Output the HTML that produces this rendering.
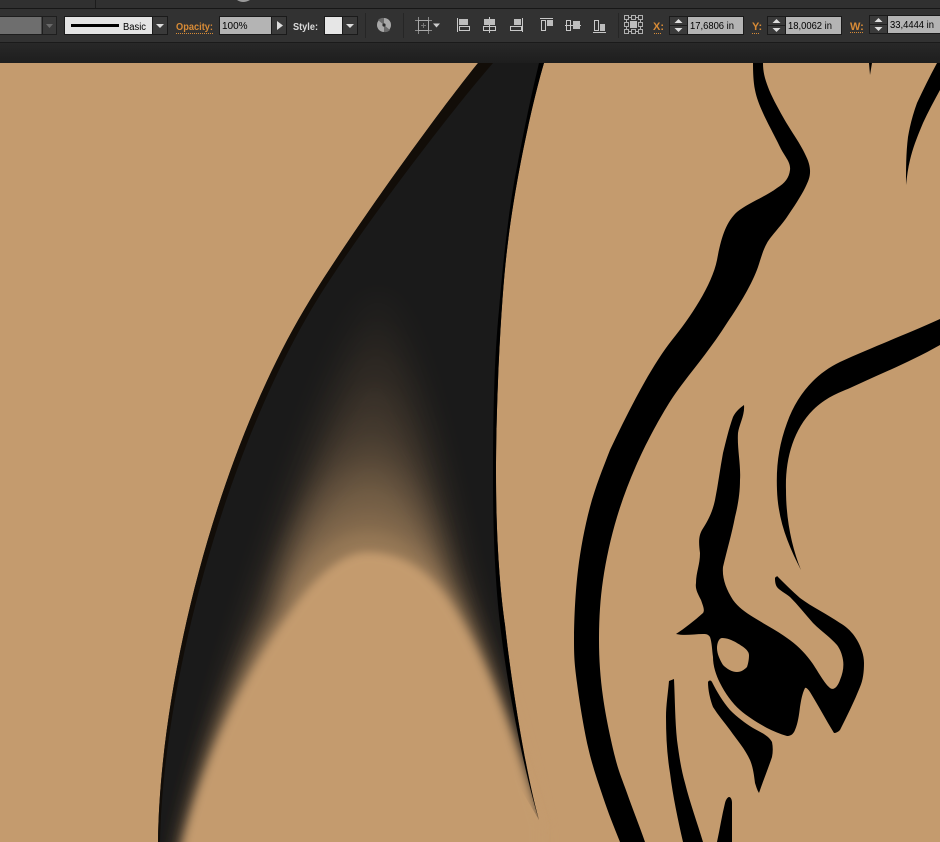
<!DOCTYPE html>
<html>
<head>
<meta charset="utf-8">
<style>
html,body{margin:0;padding:0;background:#c49b6e;}
body{width:940px;height:842px;overflow:hidden;}
svg{display:block;}
text{font-family:"Liberation Sans",sans-serif;}
</style>
</head>
<body>
<svg width="940" height="842" viewBox="0 0 940 842" xmlns="http://www.w3.org/2000/svg">
<defs>
<filter id="b2" x="-20%" y="-20%" width="140%" height="140%"><feGaussianBlur stdDeviation="4.5"/></filter>
<filter id="b6" x="-20%" y="-20%" width="140%" height="140%"><feGaussianBlur stdDeviation="7"/></filter>
<filter id="b10" x="-20%" y="-20%" width="140%" height="140%"><feGaussianBlur stdDeviation="10"/></filter>
<filter id="b14" x="-20%" y="-20%" width="140%" height="140%"><feGaussianBlur stdDeviation="14"/></filter>
<linearGradient id="band" x1="0" y1="0" x2="0" y2="1"><stop offset="0" stop-color="#282828"/><stop offset="1" stop-color="#1e1e1e"/></linearGradient>
</defs>

<rect width="940" height="842" fill="#c49b6e"/>

<!-- horn body -->
<path fill="#1a1a1a" d="M478 63 L544 63 C533 100 515 180 507 250 C501 300 496 400 496 473 C496 540 500 590 505 625 C511 680 525 770 539 820 L480 720 L370 650 L255 760 L205 860 L158 860 L158 842 C160 680 218 450 310 300 C356 225 440 110 478 63 Z"/>

<!-- gradient glow -->
<g fill="#c49b6e">
<path opacity=".04" filter="url(#b14)" d="M172 860 C190 780 215 690 240 611 C280 490 345 295 378 295 C410 295 445 440 470 560 C495 660 520 750 540 825 L540 870 Z"/>
<path opacity=".05" filter="url(#b14)" d="M173 860 C191 779 218 689 246 611 C285 501 345 331 376 331 C409 331 442 458 466 564 C494 659 519 749 540 825 L540 870 Z"/>
<path opacity=".05" filter="url(#b14)" d="M174 860 C193 777 220 687 252 611 C289 511 342 361 375 361 C407 361 440 472 463 568 C492 657 519 747 540 825 L540 870 Z"/>
<path opacity=".07" filter="url(#b10)" d="M175 860 C194 776 222 686 257 611 C288 520 340 389 374 389 C406 389 437 486 461 572 C491 656 518 746 540 825 L540 870 Z"/>
<path opacity=".08" filter="url(#b10)" d="M176 860 C195 775 225 685 263 610 C287 510 338 419 373 419 C405 419 435 502 458 576 C490 655 518 745 540 825 L540 870 Z"/>
<path opacity=".12" filter="url(#b10)" d="M177 860 C196 774 227 684 267 610 C290 520 335 445 372 445 C408 445 433 514 455 579 C489 654 517 744 540 825 L540 870 Z"/>
<path opacity=".18" filter="url(#b10)" d="M178 860 C197 773 229 683 271 610 C292 530 332 470 370 470 C408 470 431 527 453 582 C488 653 517 743 540 825 L540 870 Z"/>
<path opacity=".12" filter="url(#b6)" d="M178 860 C198 772 231 682 275 610 C295 540 332 491 370 491 C406 491 430 536 451 585 C487 652 516 742 540 825 L540 870 Z"/>
<path opacity=".16" filter="url(#b6)" d="M179 860 C198 771 232 681 278 610 C300 545 335 511 369 511 C405 511 428 546 449 587 C486 651 516 741 540 825 L540 870 Z"/>
<path opacity=".30" filter="url(#b6)" d="M179 860 C199 771 236 681 284 610 C305 555 338 531 368 531 C403 531 426 556 447 590 C486 651 515 741 540 825 L540 870 Z"/>
<path filter="url(#b2)" d="M180 860 C200 770 240 680 292 610 C318 572 345 552 367 552 C400 552 425 568 445 595 C485 653 515 740 540 825 L540 870 Z"/>
</g>

<!-- horn left outline -->
<path fill="#120d08" d="M478 63 L493 63 C452 110 362 227 317 300 C225 450 163 685 160 842 L158 842 C160 680 218 450 310 300 C356 225 440 110 478 63 Z"/>
<!-- horn right line -->
<path fill="#000" d="M544 63 C533 100 515 180 507 250 C501 300 496 400 496 473 C496 540 500 590 505 625 C511 680 525 770 539 820 C525 775 505 680 498 605 C494 560 493 520 493 473 C493 400 495 350 499 310 C503 260 510 200 517 167 C523 135 530 100 539 63 Z"/>

<!-- big S-stroke -->
<path fill="#000" d="M753 63 C753 72 753.3 81.7 755 90 S758.8 103.5 763 113 S775.5 137.5 780 147 S791 162 790 170 C789 178 785 183 777 188 C765 197 748 203 737 212 C726 222 721 238 717 260 C712 285 690 318 672 340 C650 368 628 412 610 450 C603 468 595.3 487 590 507 S580.7 548 578 570 S574 621 574 640 S574.7 665 577 683 S583.7 728 588 747 S597.7 781 603 797 S614 827 620 842 L645 842 C639 825 632 807.2 627 793 S619 773 615 757 S605.7 716.5 603 697 S599 659.5 599 640 S600 600.5 603 580 S610.8 537.5 617 517 S630.7 477 640 457 S662.3 413.2 673 397 C688 375 708 353 727 323 C740 304 752 284 758 267 C761 258 763 250 767 243 S780.7 226.2 787 217 S801.2 195.8 805 188 S810.3 176.3 810 170 S807.5 158.8 803 150 S788.8 127.5 783 117 S771.3 96 768 87 S763 72 763 63 Z"/>

<!-- thin stroke bottom -->
<path fill="#000" d="M669 681 L674 679 C675 700 675 720 677 740 C679 755 681 769 685 783 C690 803 697 822 703 842 L683 842 C678 820 673 797 670 773 C667 755 666 736 666 717 C666 705 668 693 669 681 Z"/>
<path fill="#000" d="M717 842 C720 828 722 815 725 803 C726 799 728 797 729 797 C731 797 732 800 732 803 L732 842 Z"/>

<!-- nose shape -->
<path fill="#000" fill-rule="evenodd" d="M744 405 C745 415 739 425 738 433 C737 448 741 465 740 480 C740 493 738 505 735 517 C732 533 727 550 723 567 C722 578 726 589 733 600 C738 607 745 612 753 617 C764 624 776 630 787 638 C796 644 804 652 810 660 C817 669 823 682 830 688 C834 691 838 686 840 680 C843 673 844 666 843 660 C842 654 840 649 837 645 C830 637 821 631 813 623 C805 614 798 605 790 597 C785 593 779 590 777 587 C775 584 775 580 775 578 C776 576 778 576 778 577 C785 584 792 591 800 598 C812 607 827 614 840 623 C847 627 853 633 857 640 C861 647 864 655 864 663 C864 672 863 680 860 687 C854 702 847 716 840 730 C838 732 836 733 834 733 C826 720 818 705 810 692 C808 689 806 687 805 688 C802 694 801 701 800 707 C799 715 798 723 795 730 C793 735 790 736 787 736 C780 734 773 731 767 728 C758 723 748 717 740 710 C732 703 725 693 720 683 C716 675 713 666 713 657 C712 650 712 643 710 637 C708 634 706 634 703 634 C694 634 685 636 676 634 C685 628 694 621 703 613 C705 610 703 606 701 600 C698 594 695 589 696 583 C696 572 700 565 700 553 C699 545 698 537 702 530 C707 522 712 514 715 500 C718 485 720 469 723 453 C726 441 729 428 733 417 C736 411 740 408 744 405 Z M717 648 C717 643 719 638 722 638 C727 638 732 640 737 643 C742 646 749 650 749 655 C749 660 748 664 747 667 C744 670 741 672 737 672 C732 672 727 669 723 665 C720 660 717 654 717 648 Z"/>

<!-- lower fin -->
<path fill="#000" d="M708 682 C709 680 711 680 712 682 C717 692 723 702 730 710 C737 717 745 723 753 728 C760 732 768 735 772 742 C773 747 773 752 772 757 C768 769 763 781 759 793 C757 790 756 786 755 783 C754 775 753 767 750 760 C745 749 737 740 730 730 C724 722 718 715 713 707 C710 699 708 690 708 682 Z"/>

<!-- right curve -->
<path fill="#000" d="M940 319 C900 337 870 348 840 362 C815 374 797 395 787 423 C779 445 776 465 777 490 C778 520 788 545 801 570 C792 548 786 520 786 490 C785 460 793 430 813 410 C825 398 838 393 850 388 C880 374 910 362 940 345 Z"/>

<!-- top-right strokes -->
<path fill="#000" d="M937 63 C930 76 923 90 917 103 C913 114 910 125 908 137 C906 153 906 169 906 185 C907 176 908 168 910 160 C913 147 918 135 923 123 C928 112 934 101 940 90 L940 63 Z"/>
<path fill="#000" d="M869 63 L872 63 L870 75 Z"/>

<!-- top chrome -->
<rect x="0" y="0" width="940" height="8" fill="#303030"/>
<rect x="95" y="0" width="1" height="8" fill="#1c1c1c"/>
<path d="M237 0 Q243 4 250 0 Z" fill="#9a9a9a"/>
<rect x="0" y="8" width="940" height="1" fill="#171717"/>
<rect x="0" y="9" width="940" height="33" fill="#323232"/>
<rect x="0" y="42" width="940" height="1" fill="#1a1a1a"/>
<rect x="0" y="43" width="940" height="20" fill="url(#band)"/>

<!-- fill swatch -->
<rect x="-2" y="16.5" width="44" height="18" fill="#6e6e6e" stroke="#1e1e1e"/>
<rect x="42.5" y="16.5" width="14" height="18" fill="#3a3a3a" stroke="#1e1e1e"/>
<path d="M46 24 h7 l-3.5 4 z" fill="#6a6a6a"/>

<!-- stroke -->
<rect x="64.5" y="16.5" width="88" height="18" fill="#e4e4e4" stroke="#1a1a1a"/>
<rect x="71" y="24" width="48" height="3" fill="#000"/>
<text x="123" y="30" font-size="10" fill="#000" textLength="23" lengthAdjust="spacingAndGlyphs">Basic</text>
<rect x="152.5" y="16.5" width="15" height="18" fill="#3a3a3a" stroke="#1a1a1a"/>
<path d="M156 24 h8 l-4 4 z" fill="#ddd"/>

<!-- opacity -->
<text x="176" y="30" font-size="10" font-weight="bold" fill="#d88b36" textLength="37" lengthAdjust="spacingAndGlyphs">Opacity:</text>
<line x1="176" y1="33.5" x2="213" y2="33.5" stroke="#d88b36" stroke-dasharray="1 1"/>
<rect x="219.5" y="16.5" width="52" height="18" fill="#b4b4b4" stroke="#1a1a1a"/>
<text x="222" y="29" font-size="10" fill="#000">100%</text>
<rect x="271.5" y="16.5" width="15" height="18" fill="#3a3a3a" stroke="#1a1a1a"/>
<path d="M277 21 l6 4.5 l-6 4.5 z" fill="#ddd"/>

<!-- style -->
<text x="293" y="30" font-size="10" font-weight="bold" fill="#dcdcdc" textLength="25" lengthAdjust="spacingAndGlyphs">Style:</text>
<rect x="324.5" y="16.5" width="18" height="18" fill="#e6e6e6" stroke="#1a1a1a"/>
<rect x="342.5" y="16.5" width="15" height="18" fill="#3a3a3a" stroke="#1a1a1a"/>
<path d="M346 24 h8 l-4 4 z" fill="#ddd"/>

<rect x="365" y="13" width="1" height="25" fill="#262626"/>
<circle cx="384" cy="25" r="7" fill="#a8a8a8"/>
<path d="M384 25 L378 20 A7 7 0 0 1 384 18 Z M384 25 L390 30 A7 7 0 0 1 384 32 Z" fill="#6a6a6a"/>
<circle cx="384" cy="25" r="1.6" fill="#2a2a2a"/>
<rect x="403" y="13" width="1" height="25" fill="#262626"/>

<!-- transform icon -->
<rect x="418.5" y="20.5" width="10" height="10" fill="none" stroke="#aaa"/>
<path d="M415 20.5 h3 M429 20.5 h3 M415 30.5 h3 M429 30.5 h3 M418.5 17 v3 M428.5 17 v3 M418.5 31 v3 M428.5 31 v3" stroke="#888" fill="none"/>
<path d="M421 25.5 h5 M423.5 23 v5" stroke="#777" fill="none"/>
<path d="M433 23.5 h7 l-3.5 4 z" fill="#ccc"/>

<!-- align icons -->
<g fill="none" stroke="#c8c8c8">
<path d="M457.5 18 v14"/><rect x="459.5" y="26.5" width="10" height="4"/>
<path d="M489.5 17 v16"/><rect x="483.5" y="26.5" width="12" height="4"/>
<path d="M522.5 18 v14"/><rect x="510.5" y="26.5" width="11" height="4"/>
<path d="M540 18.5 h13"/><rect x="541.5" y="20.5" width="4" height="10"/>
<path d="M565 25.5 h16"/><rect x="566.5" y="20.5" width="4" height="10"/>
<path d="M593 32.5 h13"/><rect x="594.5" y="20.5" width="4" height="10"/>
</g>
<g fill="#bdbdbd">
<rect x="459" y="19" width="9" height="6"/>
<rect x="484" y="19" width="11" height="6"/>
<rect x="514" y="19" width="7" height="6"/>
<rect x="547" y="20" width="6" height="6"/>
<rect x="573" y="21" width="7" height="8"/>
<rect x="600" y="24" width="5" height="7"/>
</g>

<rect x="618" y="13" width="1" height="25" fill="#262626"/>

<!-- reference point grid -->
<g fill="none" stroke="#b0b0b0">
<rect x="624.5" y="15.5" width="4" height="4"/><rect x="631.5" y="15.5" width="4" height="4"/><rect x="638.5" y="15.5" width="4" height="4"/>
<rect x="624.5" y="22.5" width="4" height="4"/><rect x="638.5" y="22.5" width="4" height="4"/>
<rect x="624.5" y="29.5" width="4" height="4"/><rect x="631.5" y="29.5" width="4" height="4"/><rect x="638.5" y="29.5" width="4" height="4"/>
<path d="M629 17.5 h2 M636 17.5 h2 M629 31.5 h2 M636 31.5 h2 M626.5 20 v2 M626.5 27 v2 M640.5 20 v2 M640.5 27 v2"/>
</g>
<rect x="630" y="21" width="7" height="7" fill="#bdbdbd"/>

<!-- X -->
<text x="653" y="30" font-size="11" font-weight="bold" fill="#d88b36">X:</text>
<line x1="654" y1="33.5" x2="662" y2="33.5" stroke="#d88b36" stroke-dasharray="1 1"/>
<rect x="669.5" y="16.5" width="18" height="18" fill="#3a3a3a" stroke="#1a1a1a"/>
<path d="M670 25.5 h17" stroke="#1e1e1e"/>
<path d="M678.5 19 l4 4 h-8 z M678.5 32 l4 -4 h-8 z" fill="#ddd"/>
<rect x="687.5" y="16.5" width="56" height="18" fill="#b4b4b4" stroke="#1a1a1a"/>
<text x="690" y="29" font-size="10" fill="#000" textLength="44" lengthAdjust="spacingAndGlyphs">17,6806 in</text>

<!-- Y -->
<text x="752" y="30" font-size="11" font-weight="bold" fill="#d88b36">Y:</text>
<line x1="752" y1="33.5" x2="760" y2="33.5" stroke="#d88b36" stroke-dasharray="1 1"/>
<rect x="767.5" y="16.5" width="18" height="18" fill="#3a3a3a" stroke="#1a1a1a"/>
<path d="M768 25.5 h17" stroke="#1e1e1e"/>
<path d="M776.5 19 l4 4 h-8 z M776.5 32 l4 -4 h-8 z" fill="#ddd"/>
<rect x="785.5" y="16.5" width="56" height="18" fill="#b4b4b4" stroke="#1a1a1a"/>
<text x="788" y="29" font-size="10" fill="#000" textLength="44" lengthAdjust="spacingAndGlyphs">18,0062 in</text>

<!-- W -->
<text x="850" y="30" font-size="11" font-weight="bold" fill="#d88b36">W:</text>
<line x1="850" y1="32.5" x2="863" y2="32.5" stroke="#d88b36" stroke-dasharray="1 1"/>
<rect x="869.5" y="15.5" width="18" height="18" fill="#3a3a3a" stroke="#1a1a1a"/>
<path d="M870 24.5 h17" stroke="#1e1e1e"/>
<path d="M878.5 18 l4 4 h-8 z M878.5 31 l4 -4 h-8 z" fill="#ddd"/>
<rect x="887.5" y="15.5" width="60" height="18" fill="#b4b4b4" stroke="#1a1a1a"/>
<text x="890" y="28" font-size="10" fill="#000" textLength="44" lengthAdjust="spacingAndGlyphs">33,4444 in</text>
</svg>
</body>
</html>
